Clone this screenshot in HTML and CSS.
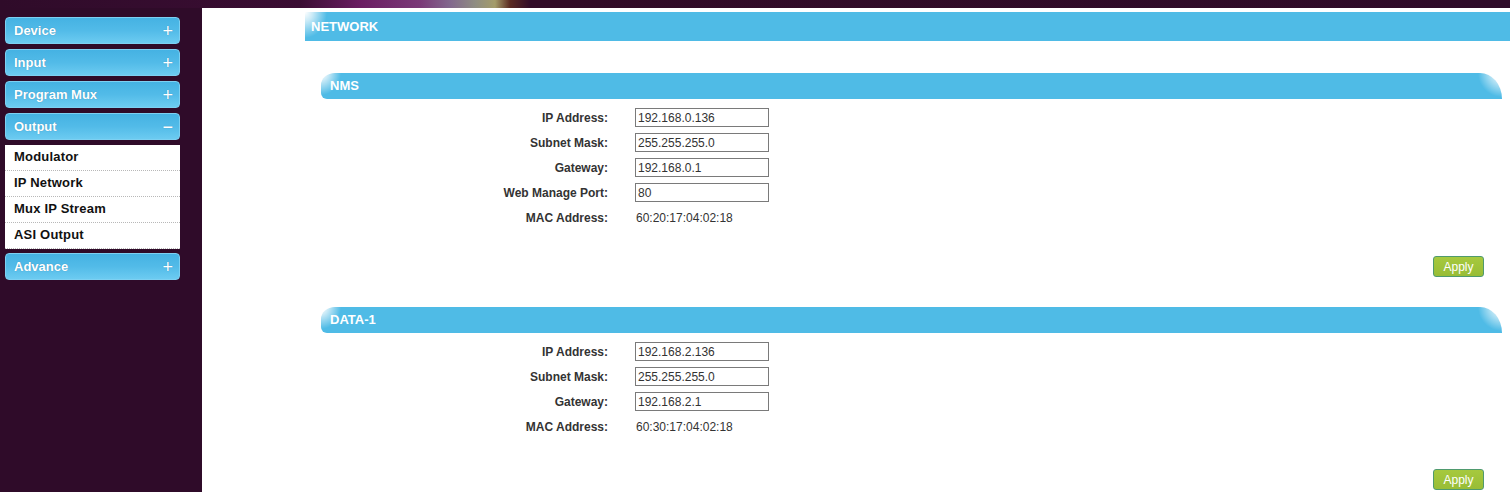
FILE: index.html
```html
<!DOCTYPE html>
<html>
<head>
<meta charset="utf-8">
<title>Network</title>
<link rel="stylesheet" href="styles.css">
</head>
<body>
<div class="topbar"></div>
<div class="main">
  <nav class="sidebar">
    <div class="menu-btn"><span>Device</span><span class="sign">+</span></div>
    <div class="menu-btn"><span>Input</span><span class="sign">+</span></div>
    <div class="menu-btn"><span>Program Mux</span><span class="sign">+</span></div>
    <div class="menu-btn"><span>Output</span><span class="sign">&minus;</span></div>
    <ul class="submenu">
      <li>Modulator</li>
      <li>IP Network</li>
      <li>Mux IP Stream</li>
      <li>ASI Output</li>
    </ul>
    <div class="menu-btn"><span>Advance</span><span class="sign">+</span></div>
  </nav>
  <section class="content">
    <div class="page-title">NETWORK</div>

    <div class="panel">
      <div class="panel-head">NMS</div>
      <div class="form">
        <label>IP Address:</label><input class="field" value="192.168.0.136">
        <label>Subnet Mask:</label><input class="field" value="255.255.255.0">
        <label>Gateway:</label><input class="field" value="192.168.0.1">
        <label>Web Manage Port:</label><input class="field" value="80">
        <label>MAC Address:</label><span class="value">60:20:17:04:02:18</span>
      </div>
      <div class="apply-row"><button class="apply">Apply</button></div>
    </div>

    <div class="panel">
      <div class="panel-head">DATA-1</div>
      <div class="form">
        <label>IP Address:</label><input class="field" value="192.168.2.136">
        <label>Subnet Mask:</label><input class="field" value="255.255.255.0">
        <label>Gateway:</label><input class="field" value="192.168.2.1">
        <label>MAC Address:</label><span class="value">60:30:17:04:02:18</span>
      </div>
      <div class="apply-row apply-row-wide"><button class="apply">Apply</button></div>
    </div>
  </section>
</div>
</body>
</html>
```

FILE: styles.css
```css
* { box-sizing: border-box; }

html, body {
  margin: 0;
  height: 100%;
}

body {
  background: #2f0b29;
  font-family: "Liberation Sans", Arial, sans-serif;
  overflow: hidden;
}

.topbar {
  height: 8px;
  background: linear-gradient(90deg,
    #2f0b29 0px, #3a0d33 300px, #6a1d62 360px, #7a3a78 420px,
    #82688e 450px, #8f8d82 475px, #a49c6a 495px, #5a2a22 510px,
    #320c28 530px, #2f0b29 100%);
}

.main {
  display: flex;
  height: calc(100% - 8px);
}

.sidebar {
  width: 202px;
  flex: none;
  padding: 9px 0 0 5px;
  display: flex;
  flex-direction: column;
  gap: 5px;
}

.menu-btn {
  width: 175px;
  height: 27px;
  display: flex;
  align-items: center;
  justify-content: space-between;
  padding: 0 6px 0 8px;
  border-radius: 4px;
  border: 1px solid #7dd0f2;
  background: linear-gradient(180deg, #45b2e3 0%, #52bbe8 50%, #6ccbf1 100%);
  color: #fff;
  font-size: 13px;
  font-weight: bold;
  text-shadow: 0 0 1px rgba(0, 60, 100, 0.4);
}

.menu-btn .sign {
  font-size: 18px;
  font-weight: normal;
  line-height: 1;
}

.submenu {
  list-style: none;
  margin: 0 0 -1px 0;
  padding: 0;
  width: 175px;
  background: #fff;
}

.submenu li {
  height: 26px;
  line-height: 24px;
  padding-left: 9px;
  font-size: 13px;
  font-weight: bold;
  letter-spacing: 0.2px;
  color: #111;
  border-bottom: 1px dotted #b8b8b8;
}

.content {
  flex: 1;
  background: #fff;
  padding: 4px 0 0 103px;
}

.page-title {
  height: 29px;
  line-height: 29px;
  padding-left: 6px;
  color: #fff;
  font-size: 13px;
  font-weight: bold;
  background:
    radial-gradient(ellipse 22px 26px at 0 0, rgba(255,255,255,1) 0%, rgba(255,255,255,0.7) 35%, rgba(255,255,255,0) 100%),
    #4fbbe6;
}

.panel {
  margin: 32px 8px 0 16px;
}

.panel + .panel {
  margin-top: 30px;
}

.panel-head {
  height: 26px;
  line-height: 26px;
  padding-left: 9px;
  color: #fff;
  font-size: 13px;
  font-weight: bold;
  border-radius: 14px 22px 0 6px / 12px 26px 0 6px;
  background:
    radial-gradient(ellipse 20px 22px at 0 0, rgba(255,255,255,1) 0%, rgba(255,255,255,0.7) 35%, rgba(255,255,255,0) 100%),
    radial-gradient(ellipse 24px 24px at 100% 0, rgba(255,255,255,1) 0%, rgba(255,255,255,0.7) 35%, rgba(255,255,255,0) 100%),
    #4fbbe6;
}

.form {
  display: grid;
  grid-template-columns: 287px 134px;
  grid-auto-rows: 25px;
  column-gap: 27px;
  align-items: center;
  margin-top: 6px;
}

.form label {
  text-align: right;
  font-size: 12px;
  font-weight: bold;
  color: #333;
}

.field {
  width: 134px;
  height: 19px;
  border: 1px solid #7a7a7a;
  padding: 0 2px;
  font-family: "Liberation Sans", Arial, sans-serif;
  font-size: 12px;
  color: #333;
  background: #fff;
}

.value {
  font-size: 12px;
  color: #333;
  padding-left: 1px;
}

.apply-row {
  display: flex;
  justify-content: flex-end;
  padding: 26px 18px 0 0;
}

.apply-row-wide {
  padding-top: 30px;
}

.apply {
  width: 51px;
  height: 21px;
  padding: 0;
  border: 1px solid #4f9a6e;
  border-radius: 3px;
  background: linear-gradient(180deg, #a6c93e 0%, #98bd36 100%);
  color: #fff;
  font-family: "Liberation Sans", Arial, sans-serif;
  font-size: 12px;
}
```
